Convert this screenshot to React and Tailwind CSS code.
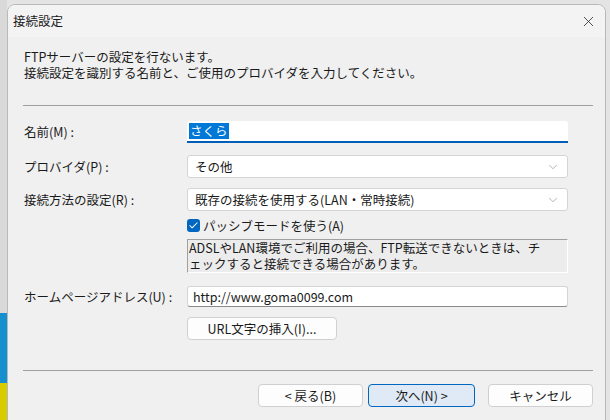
import { X, ChevronDown, Check } from 'lucide-react'

const font = { fontFamily: '"Noto Sans CJK JP", "Noto Sans", sans-serif' }

function Row({ label, children, className = '' }) {
  return (
    <div className={`flex items-center ${className}`}>
      <div className="w-[163px] shrink-0">{label}</div>
      <div className="w-[381px]">{children}</div>
    </div>
  )
}

function Select({ value }) {
  return (
    <div className="h-[23px] bg-white border border-[#d4d4d4] rounded-[3px] flex items-center justify-between pl-[7px] pr-[7px]">
      <span>{value}</span>
      <ChevronDown size={14} strokeWidth={1.1} className="text-[#8a8a8a]" />
    </div>
  )
}

function Button({ children, primary, className = '' }) {
  return (
    <div
      className={`h-[23px] rounded-[4px] flex items-center justify-center ${
        primary
          ? 'bg-[#dfeaf6] border border-[#0067c0]'
          : 'bg-[#fdfdfd] border border-[#d0d0d0]'
      } ${className}`}
    >
      {children}
    </div>
  )
}

export default function App() {
  return (
    <div
      className="w-[610px] h-[420px] overflow-hidden pt-[4px] pl-[7px] bg-[#e4e4e4] bg-no-repeat bg-size-[7px_100%] bg-[linear-gradient(to_bottom,#d9d9d9_0px,#d9d9d9_313px,#168fcf_313px,#168fcf_383px,#d6cc00_383px)] text-[12.5px] text-[#1a1a1a] leading-[16px]"
      style={font}
    >
      <div className="w-[599px] h-[420px] rounded-t-[8px] border border-[#b8b8b8] bg-[#f0f0f0] flex flex-col overflow-hidden">
        {/* title bar */}
        <div className="h-[32px] shrink-0 bg-[#f3f3f3] flex items-center justify-between pl-[5px] pr-[8px]">
          <span className="text-[12.5px]">接続設定</span>
          <X size={17} strokeWidth={1.1} className="text-[#222]" />
        </div>

        <div className="flex flex-col pl-[15px] pr-[13px]">
          <div className="mt-[12px] pl-[1px]">
            <div>FTPサーバーの設定を行ないます。</div>
            <div>接続設定を識別する名前と、ご使用のプロバイダを入力してください。</div>
          </div>

          <div className="mt-[24px] h-[1px] bg-[#a0a0a0] w-[570px]" />

          <div className="pl-[1px] flex flex-col">
            <Row label="名前(M) :" className="mt-[15px]">
              <div className="h-[22px] bg-white border-b-2 border-[#005fb8] rounded-t-[3px] flex items-center pl-[2px]">
                <span className="bg-[#0078d7] text-white px-[1px] leading-[16px]">さくら</span>
              </div>
            </Row>
            <Row label="プロバイダ(P) :" className="mt-[12px]">
              <Select value="その他" />
            </Row>
            <Row label="接続方法の設定(R) :" className="mt-[10px]">
              <Select value="既存の接続を使用する(LAN・常時接続)" />
            </Row>
            <Row label="" className="mt-[7px]">
              <div className="flex items-center gap-[3px] h-[15px]">
                <div className="w-[13px] h-[13px] rounded-[3px] bg-[#0067c0] flex items-center justify-center">
                  <Check size={11} strokeWidth={2.2} className="text-white" />
                </div>
                <span>パッシブモードを使う(A)</span>
              </div>
            </Row>
            <Row label="" className="mt-[6px]">
              <div className="h-[34px] border-t border-l border-[#a0a0a0] border-b border-r border-b-white border-r-white bg-[#ececec] pl-[1px] whitespace-nowrap">
                <div>ADSLやLAN環境でご利用の場合、FTP転送できないときは、チ</div>
                <div>ェックすると接続できる場合があります。</div>
              </div>
            </Row>
            <Row label="ホームページアドレス(U) :" className="mt-[13px]">
              <div className="h-[21px] bg-white border border-[#d4d4d4] border-b-[#8a8a8a] rounded-[3px] flex items-center pl-[5px]">
                http://www.goma0099.com
              </div>
            </Row>
            <Row label="" className="mt-[10px]">
              <Button className="w-[150px]">URL文字の挿入(I)...</Button>
            </Row>
          </div>

          <div className="mt-[30px] h-[1px] bg-[#a0a0a0] w-[570px]" />

          <div className="mt-[13px] flex w-[570px] justify-end">
            <Button className="w-[105px]">&lt; 戻る(B)</Button>
            <Button primary className="w-[107px] ml-[5px]">次へ(N) &gt;</Button>
            <Button className="w-[105px] ml-[13px]">キャンセル</Button>
          </div>
        </div>
      </div>
    </div>
  )
}
